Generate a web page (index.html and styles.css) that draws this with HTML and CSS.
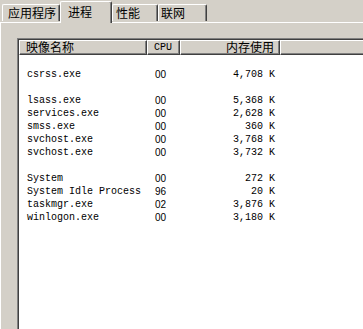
FILE: index.html
```html
<!DOCTYPE html>
<html>
<head>
<meta charset="utf-8">
<link rel="stylesheet" href="styles.css">
</head>
<body>
<div class="window">
  <div class="tabs">
    <div class="tab t1">应用程序</div>
    <div class="tab t2 active">进程</div>
    <div class="tab t3">性能</div>
    <div class="tab t4">联网</div>
  </div>
  <div class="panel">
    <div class="list">
      <div class="header">
        <div class="hcell c-name">映像名称</div>
        <div class="hcell c-cpu mono">CPU</div>
        <div class="hcell c-mem">内存使用</div>
        <div class="hcell c-rest"></div>
      </div>
      <div class="rows">
        <div class="row"><span></span><span></span><span></span></div>
        <div class="row"><span class="name">csrss.exe</span><span class="cpu">00</span><span class="mem">4,708 K</span></div>
        <div class="row"><span></span><span></span><span></span></div>
        <div class="row"><span class="name">lsass.exe</span><span class="cpu">00</span><span class="mem">5,368 K</span></div>
        <div class="row"><span class="name">services.exe</span><span class="cpu">00</span><span class="mem">2,628 K</span></div>
        <div class="row"><span class="name">smss.exe</span><span class="cpu">00</span><span class="mem">360 K</span></div>
        <div class="row"><span class="name">svchost.exe</span><span class="cpu">00</span><span class="mem">3,768 K</span></div>
        <div class="row"><span class="name">svchost.exe</span><span class="cpu">00</span><span class="mem">3,732 K</span></div>
        <div class="row"><span></span><span></span><span></span></div>
        <div class="row"><span class="name">System</span><span class="cpu">00</span><span class="mem">272 K</span></div>
        <div class="row"><span class="name">System Idle Process</span><span class="cpu">96</span><span class="mem">20 K</span></div>
        <div class="row"><span class="name">taskmgr.exe</span><span class="cpu">02</span><span class="mem">3,876 K</span></div>
        <div class="row"><span class="name">winlogon.exe</span><span class="cpu">00</span><span class="mem">3,180 K</span></div>
      </div>
    </div>
  </div>
</div>
</body>
</html>
```

FILE: styles.css
```css
html, body {
  margin: 0;
  padding: 0;
  background: #d4d0c8;
  overflow: hidden;
}
.window {
  width: 363px;
  height: 329px;
  overflow: hidden;
  font-family: "Noto Sans CJK SC", "Noto Sans", sans-serif;
  font-size: 12px;
  color: #000;
}
.tabs {
  display: flex;
  align-items: flex-end;
  height: 22px;
  padding-left: 2px;
  position: relative;
  z-index: 1;
}
.tab {
  box-sizing: border-box;
  height: 17px;
  border-top: 1px solid #fff;
  border-left: 1px solid #fff;
  border-right: 1px solid #404040;
  box-shadow: inset -1px 0 #808080;
  border-radius: 2px 2px 0 0;
  line-height: 15px;
  padding-left: 5px;
  margin-bottom: 1px;
  background: #d4d0c8;
}
.t1 { width: 58px; }
.t2 { width: 52px; }
.t3 { width: 46px; padding-left: 3px; }
.t4 { width: 49px; padding-left: 2px; }
.tab.active {
  height: 22px;
  margin-bottom: -1px;
  padding-left: 7px;
  line-height: 19px;
  border-right: 1px solid #404040;
}
.panel {
  height: 307px;
  border-top: 1px solid #fff;
  border-left: 1px solid #fff;
  box-sizing: border-box;
  padding: 15px 0 0 16px;
}
.list {
  width: 420px;
  height: 300px;
  background: #fff;
  border-top: 1px solid #808080;
  border-left: 1px solid #808080;
  box-shadow: inset 1px 1px #404040;
  padding: 1px 0 0 1px;
}
.header {
  display: flex;
  height: 15px;
}
.hcell {
  box-sizing: border-box;
  height: 15px;
  background: #d4d0c8;
  border-top: 1px solid #fff;
  border-left: 1px solid #fff;
  border-right: 1px solid #404040;
  border-bottom: 1px solid #404040;
  box-shadow: inset -1px -1px #808080;
  line-height: 12px;
  white-space: nowrap;
}
.c-name { width: 128px; padding-left: 6px; }
.c-cpu { width: 33px; padding-left: 6px; }
.c-mem { width: 100px; text-align: right; padding-right: 5px; }
.c-rest { flex: 1; }
.mono {
  font-family: "Liberation Mono", "DejaVu Sans Mono", monospace;
  font-size: 10px;
  line-height: 13px;
}
.rows {
  padding-top: 0;
}
.row {
  display: grid;
  grid-template-columns: 128px 33px 100px;
  height: 13px;
  line-height: 13px;
}
.name {
  padding-left: 8px;
  font-family: "Liberation Mono", "DejaVu Sans Mono", monospace;
  font-size: 10px;
  white-space: pre;
}
.cpu {
  padding-left: 8px;
  font-family: "Liberation Sans", Arial, sans-serif;
  font-size: 10px;
}
.mem {
  text-align: right;
  padding-right: 5px;
  font-family: "Liberation Mono", "DejaVu Sans Mono", monospace;
  font-size: 10px;
}
```
